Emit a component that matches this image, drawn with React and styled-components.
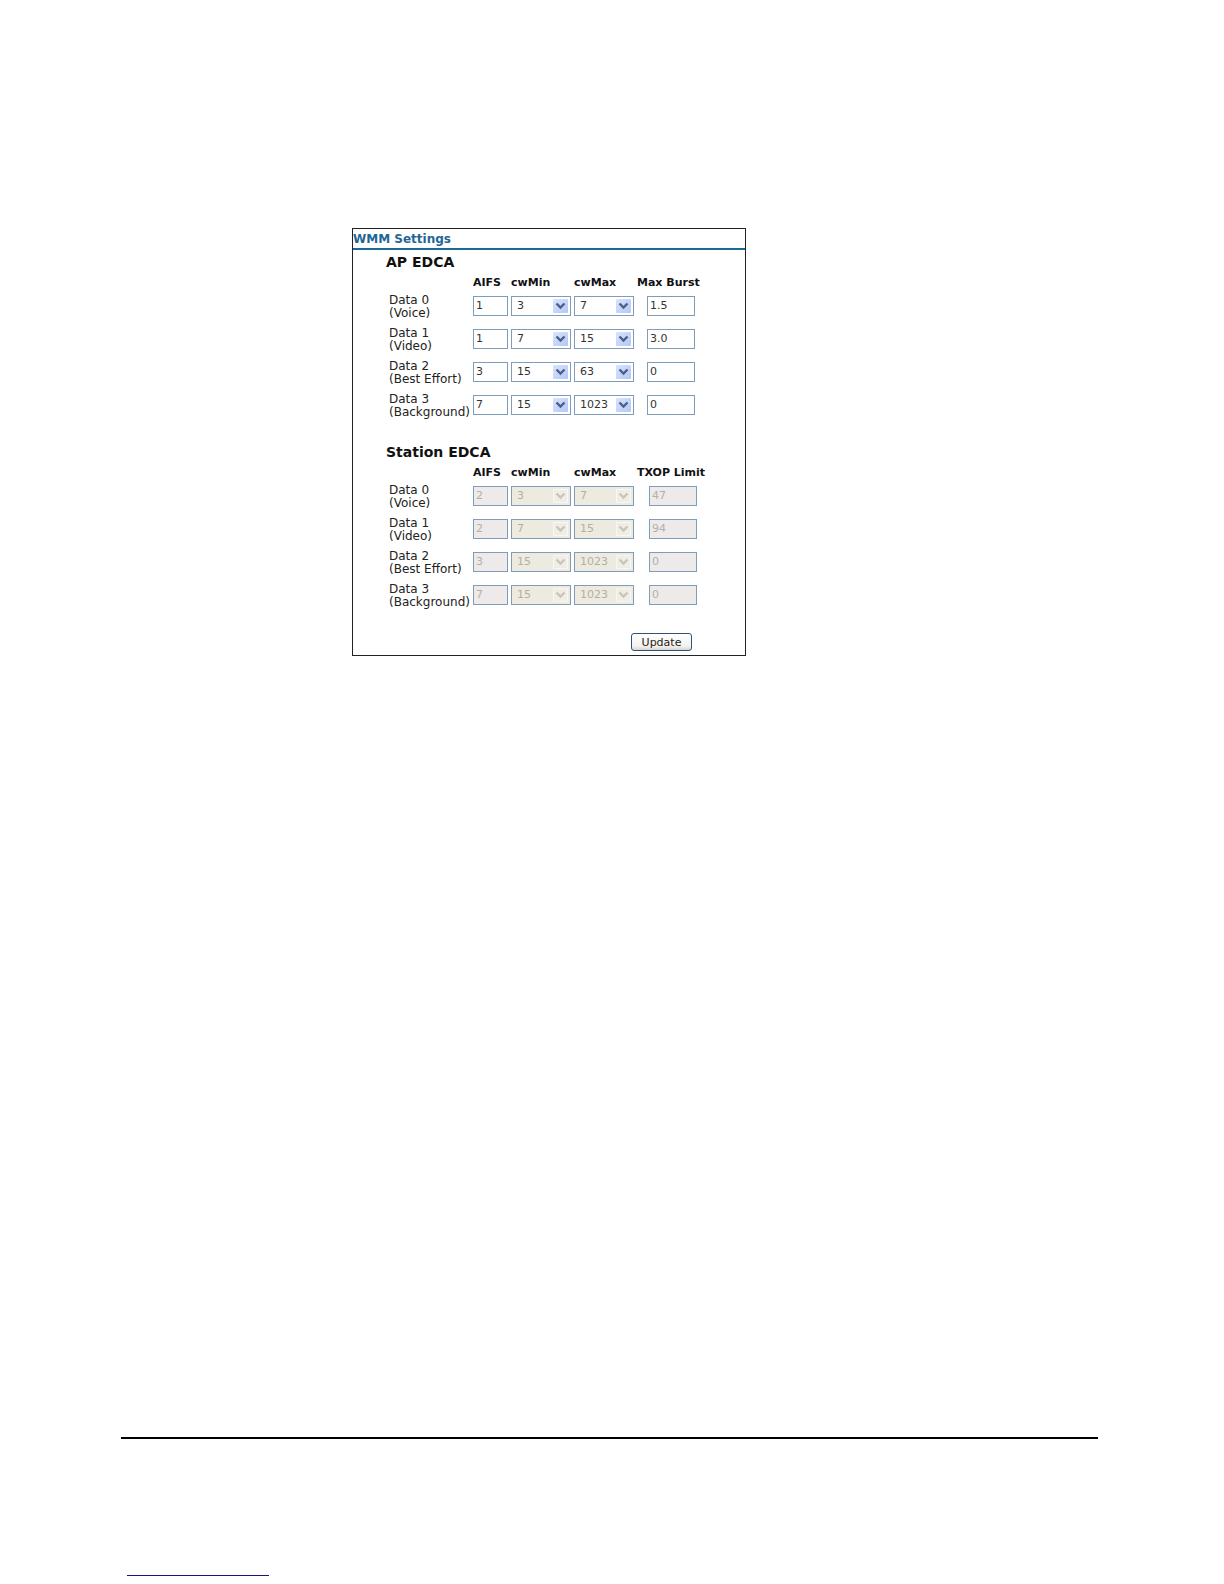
import React from "react";
import styled, { createGlobalStyle, css } from "styled-components";

const GlobalStyle = createGlobalStyle`
  * { box-sizing: border-box; }
  body {
    margin: 0;
    background: #fff;
    color: #111;
    font-family: Verdana, "DejaVu Sans", sans-serif;
    font-size: 12px;
  }
`;

const Page = styled.div`
  display: flex;
  flex-direction: column;
  min-height: 100vh;
  padding-top: 228px;
`;

const Panel = styled.form`
  width: 394px;
  max-width: 100%;
  margin-left: 352px;
  padding-bottom: 4px;
  border: 1px solid #222;
  background: #fff;
`;

const PanelTitle = styled.h1`
  margin: 0;
  padding-top: 2px;
  border-bottom: 2px solid #1b6a94;
  color: #1f6595;
  font-size: 12px;
  line-height: 17px;
`;

const Section = styled.section`
  padding: 1px 0 0 33px;

  & + & {
    margin-top: 19px;
  }
`;

const SectionTitle = styled.h2`
  margin: 0;
  font-size: 14px;
  line-height: 22px;
`;

const Table = styled.table`
  table-layout: fixed;
  width: ${(p) => 249 + p.$limitWidth}px;
  margin-left: 2px;
  border-collapse: collapse;
`;

const Col = styled.col`
  width: ${(p) => p.$width}px;
`;

const HeadCell = styled.th`
  padding: 4px 0 0;
  font-size: 11px;
  line-height: 12px;
  text-align: left;
  white-space: nowrap;
`;

const Row = styled.tr`
  height: 33px;
`;

const RowLabel = styled.th`
  padding: 2px 0 0 1px;
  color: #222;
  font-weight: normal;
  line-height: 13px;
  text-align: left;
  white-space: nowrap;
`;

const Line = styled.span`
  display: block;
`;

const Cell = styled.td`
  padding: 0;
  text-align: ${(p) => (p.$center ? "center" : "left")};
`;

const field = css`
  display: block;
  height: 20px;
  margin: 0;
  border: 1px solid #7f9db9;
  border-radius: 0;
  background: #fff;
  color: #333;
  font: 11px Verdana, "DejaVu Sans", sans-serif;
  opacity: 1;
`;

const TextField = styled.input`
  ${field}
  display: ${(p) => (p.$center ? "inline-block" : "block")};
  vertical-align: middle;
  width: ${(p) => p.$width}px;
  padding: 0 2px;

  &:disabled {
    background: #edeae9;
    color: #b3b0a9;
  }
`;

const SelectWrap = styled.span`
  display: block;
  position: relative;
  width: 60px;
`;

const Select = styled.select`
  ${field}
  appearance: none;
  width: 100%;
  padding: 0 0 0 5px;

  &:disabled {
    background: #edeadf;
    color: #b3b0a2;
  }
`;

const ArrowBox = styled.span`
  position: absolute;
  top: 3px;
  right: 3px;
  width: 15px;
  height: 14px;
  border-radius: 1px;
  background: ${(p) => (p.$off ? "#efede6" : "linear-gradient(135deg, #d9e4fd, #b3c6f6)")};
  box-shadow: ${(p) => (p.$off ? "inset 0 0 0 1px #f8f7f2" : "none")};
  color: ${(p) => (p.$off ? "#c8c6bb" : "#4a6087")};
  pointer-events: none;

  svg {
    display: block;
  }
`;

const Actions = styled.div`
  display: flex;
  justify-content: flex-end;
  margin-top: 22px;
  padding-right: 53px;
`;

const Button = styled.button`
  width: 61px;
  height: 18px;
  padding: 0;
  border: 1px solid #2f5379;
  border-radius: 3px;
  background: linear-gradient(#fff, #f3f2ee 75%, #d9d5cb);
  color: #222;
  font: 11px Verdana, "DejaVu Sans", sans-serif;
`;

const Footer = styled.footer`
  margin: auto 126px 8px 121px;
`;

const Rule = styled.hr`
  margin: 0;
  border: 0;
  border-top: 2px solid #000;
`;

const LinkRule = styled.hr`
  width: 142px;
  margin: 136px 0 0 6px;
  border: 0;
  border-top: 1px solid #15157a;
`;

const WINDOWS = ["1", "3", "7", "15", "31", "63", "127", "255", "511", "1023"];
const QUEUES = [
  ["Data 0", "(Voice)"],
  ["Data 1", "(Video)"],
  ["Data 2", "(Best Effort)"],
  ["Data 3", "(Background)"],
];

const AP = [
  ["1", "3", "7", "1.5"],
  ["1", "7", "15", "3.0"],
  ["3", "15", "63", "0"],
  ["7", "15", "1023", "0"],
];

const STATION = [
  ["2", "3", "7", "47"],
  ["2", "7", "15", "94"],
  ["3", "15", "1023", "0"],
  ["7", "15", "1023", "0"],
];

function WindowSelect({ value, label, disabled }) {
  return (
    <SelectWrap>
      <Select defaultValue={value} aria-label={label} disabled={disabled}>
        {WINDOWS.map((w) => (
          <option key={w}>{w}</option>
        ))}
      </Select>
      <ArrowBox $off={disabled}>
        <svg width="15" height="14" viewBox="0 0 15 14" aria-hidden="true">
          <path d="M3.5 4.5 L7.5 8.5 L11.5 4.5" fill="none" stroke="currentColor" strokeWidth="2.4" />
        </svg>
      </ArrowBox>
    </SelectWrap>
  );
}

function EdcaSection({ title, limitLabel, limitWidth, rows, disabled }) {
  return (
    <Section>
      <SectionTitle>{title}</SectionTitle>
      <Table $limitWidth={limitWidth}>
        <colgroup>
          <Col $width={85} />
          <Col $width={38} />
          <Col $width={63} />
          <Col $width={63} />
          <Col $width={limitWidth} />
        </colgroup>
        <thead>
          <tr>
            <Cell />
            <HeadCell scope="col">AIFS</HeadCell>
            <HeadCell scope="col">cwMin</HeadCell>
            <HeadCell scope="col">cwMax</HeadCell>
            <HeadCell scope="col">{limitLabel}</HeadCell>
          </tr>
        </thead>
        <tbody>
          {rows.map(([aifs, min, max, limit], i) => {
            const [name, kind] = QUEUES[i];
            const prefix = `${title} ${name}`;
            return (
              <Row key={name}>
                <RowLabel scope="row">
                  <Line>{name}</Line>
                  <Line>{kind}</Line>
                </RowLabel>
                <Cell>
                  <TextField $width={35} defaultValue={aifs} aria-label={`${prefix} AIFS`} disabled={disabled} />
                </Cell>
                <Cell>
                  <WindowSelect value={min} label={`${prefix} cwMin`} disabled={disabled} />
                </Cell>
                <Cell>
                  <WindowSelect value={max} label={`${prefix} cwMax`} disabled={disabled} />
                </Cell>
                <Cell $center>
                  <TextField
                    $center
                    $width={48}
                    defaultValue={limit}
                    aria-label={`${prefix} ${limitLabel}`}
                    disabled={disabled}
                  />
                </Cell>
              </Row>
            );
          })}
        </tbody>
      </Table>
    </Section>
  );
}

export default function App() {
  return (
    <>
      <GlobalStyle />
      <Page>
        <Panel onSubmit={(e) => e.preventDefault()}>
          <PanelTitle>WMM Settings</PanelTitle>
          <EdcaSection title="AP EDCA" limitLabel="Max Burst" limitWidth={68} rows={AP} />
          <EdcaSection title="Station EDCA" limitLabel="TXOP Limit" limitWidth={72} rows={STATION} disabled />
          <Actions>
            <Button type="submit">Update</Button>
          </Actions>
        </Panel>
        <Footer>
          <Rule />
          <LinkRule />
        </Footer>
      </Page>
    </>
  );
}
